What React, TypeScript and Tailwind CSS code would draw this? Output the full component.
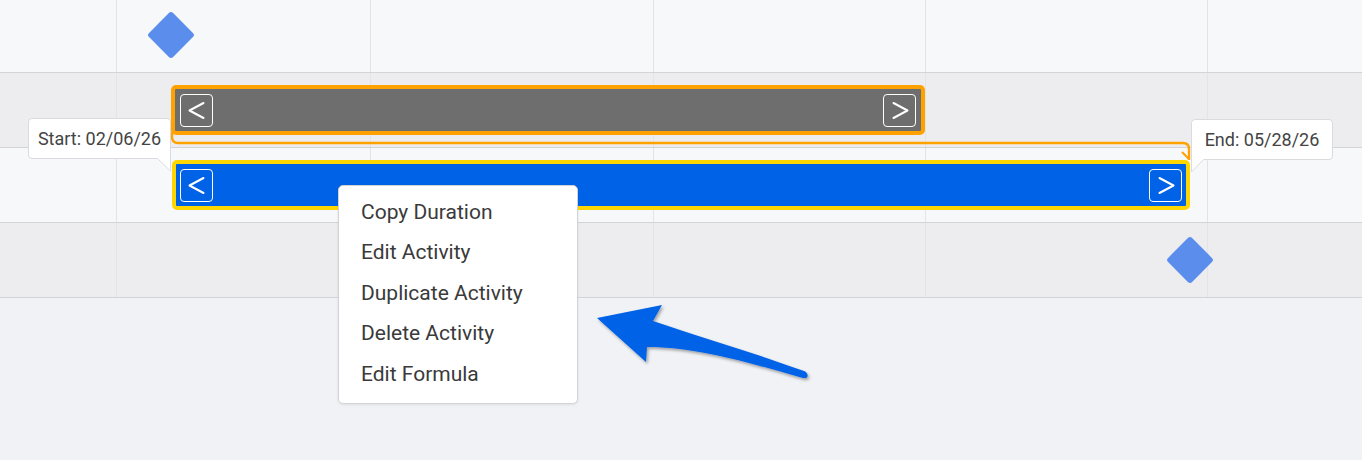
import React from "react";

const cols = [116, 254, 283, 272, 282];

function Row({ h, bg }: { h: string; bg: string }) {
  return (
    <div className={`flex ${h} ${bg} border-b border-[#d3d4d8]`}>
      {cols.map((w, i) => (
        <div
          key={i}
          style={{ width: w }}
          className={i === 0 ? "shrink-0" : "shrink-0 border-l border-[#e3e4e8]"}
        />
      ))}
      <div className="flex-1 border-l border-[#e3e4e8]" />
    </div>
  );
}

function Chevron({ dir }: { dir: "l" | "r" }) {
  return (
    <div className="w-[33px] h-[33px] rounded-[4px] border-[1.5px] border-white flex items-center justify-center">
      <svg width="30" height="30" viewBox="0 0 30 30">
        {dir === "l" ? (
          <polyline points="21.5,8 7.5,15.5 21.5,23" fill="none" stroke="white" strokeWidth="2" strokeLinecap="round" strokeLinejoin="round" />
        ) : (
          <polyline points="8.5,8 22.5,15.5 8.5,23" fill="none" stroke="white" strokeWidth="2" strokeLinecap="round" strokeLinejoin="round" />
        )}
      </svg>
    </div>
  );
}

export default function App() {
  return (
    <div
      className="relative w-full h-[460px] overflow-hidden bg-[#f1f2f5]"
      style={{ fontFamily: "Roboto, 'Liberation Sans', sans-serif" }}
    >
      <div className="flex flex-col">
        <Row h="h-[73px]" bg="bg-[#f7f8fa]" />
        <Row h="h-[75px]" bg="bg-[#ededf0]" />
        <Row h="h-[75px]" bg="bg-[#f7f8fa]" />
        <Row h="h-[75px]" bg="bg-[#ededf0]" />
      </div>

      {/* connector + arrow */}
      <svg className="absolute left-0 top-0" width="1362" height="460" viewBox="0 0 1362 460">
        <defs>
          <filter id="sh" x="-10%" y="-20%" width="130%" height="150%">
            <feDropShadow dx="1.5" dy="2" stdDeviation="1.5" floodColor="#000" floodOpacity="0.35" />
          </filter>
        </defs>
        <path
          d="M172,132 L172,137 Q172,143 178,143 L1183,143 Q1189,143 1189,149 L1189,160"
          fill="none"
          stroke="#ffa200"
          strokeWidth="2.4"
        />
        <path d="M1182,152 L1189,159" fill="none" stroke="#ffa200" strokeWidth="2" />
        <path
          d="M597,318 L662,305 L653,321 C700,337 760,355 804,371 C809,373 809,379 803,378 C760,366 700,347 647,347 L646,362 Z"
          fill="#0062e6"
          filter="url(#sh)"
        />
      </svg>

      {/* milestones */}
      <div className="absolute left-[154px] top-[18px] w-[34px] h-[34px] rotate-45 rounded-[3px] bg-[#5b8eec]" />
      <div className="absolute left-[1173px] top-[243px] w-[34px] h-[34px] rotate-45 rounded-[3px] bg-[#5b8eec]" />

      {/* gray bar */}
      <div className="absolute left-[171px] top-[85px] w-[754px] h-[50px] rounded-[5px] border-4 border-[#ffa200] bg-[#6e6e6e] flex items-center justify-between px-[5px]">
        <Chevron dir="l" />
        <Chevron dir="r" />
      </div>

      {/* blue bar */}
      <div className="absolute left-[172px] top-[160px] w-[1018px] h-[50px] rounded-[5px] border-4 border-[#ffd600] bg-[#0062e6] flex items-center justify-between px-[4px]">
        <Chevron dir="l" />
        <Chevron dir="r" />
      </div>

      {/* start tooltip */}
      <div className="absolute left-[28px] top-[118px] w-[143px] h-[41px] bg-white border border-[#dadbde] rounded-[4px] rounded-br-none flex items-center justify-center text-[18px] text-[#444]">
        Start: 02/06/26
        <svg className="absolute right-[-1px] top-[39px]" width="14" height="14" viewBox="0 0 14 14">
          <polygon points="0,0 13.5,0 13.5,13" fill="white" />
          <path d="M0.5,0.5 L13.5,13 M13.5,0 L13.5,13" stroke="#dadbde" strokeWidth="1" fill="none" />
        </svg>
      </div>

      {/* end tooltip */}
      <div className="absolute left-[1191px] top-[119px] w-[142px] h-[41px] bg-white border border-[#dadbde] rounded-[4px] rounded-bl-none flex items-center justify-center text-[18px] text-[#444]">
        End: 05/28/26
        <svg className="absolute left-[-1px] top-[39px]" width="14" height="14" viewBox="0 0 14 14">
          <polygon points="0.5,0 13,0 0.5,13" fill="white" />
          <path d="M12.5,0.5 L0.5,13 M0.5,0 L0.5,13" stroke="#dadbde" strokeWidth="1" fill="none" />
        </svg>
      </div>

      {/* context menu */}
      <div className="absolute left-[338px] top-[185px] w-[240px] bg-white border border-[#d2d3d6] rounded-[5px] pt-[6px] pb-[8px] shadow-[0_1px_3px_rgba(0,0,0,0.08)]">
        {["Copy Duration", "Edit Activity", "Duplicate Activity", "Delete Activity", "Edit Formula"].map((t) => (
          <div key={t} className="h-[40.5px] flex items-center pl-[22px] text-[21px] text-[#3a3a3a]">
            {t}
          </div>
        ))}
      </div>
    </div>
  );
}
